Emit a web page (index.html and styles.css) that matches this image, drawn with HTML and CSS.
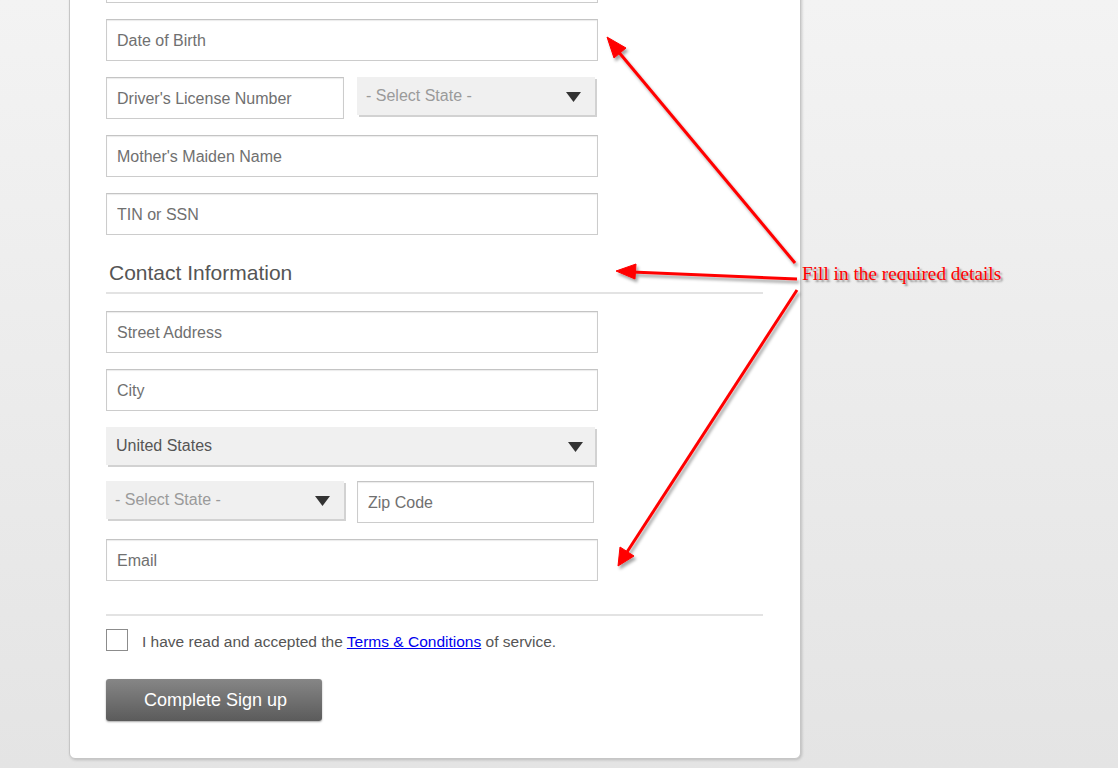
FILE: index.html
```html
<!DOCTYPE html>
<html lang="en">
<head>
<meta charset="utf-8">
<title>Sign up</title>
<link rel="stylesheet" href="styles.css">
</head>
<body>
<div class="page">
  <div class="card">
    <div class="row"><input class="field full" type="text" placeholder="Last Name"></div>
    <div class="row"><input class="field full" type="text" placeholder="Date of Birth"></div>
    <div class="row split">
      <input class="field half" type="text" placeholder="Driver's License Number">
      <div class="select half-sel"><span class="muted">- Select State -</span><svg class="tri" viewBox="0 0 15 10" width="15" height="10"><polygon points="0,0 15,0 7.5,10"/></svg></div>
    </div>
    <div class="row"><input class="field full" type="text" placeholder="Mother's Maiden Name"></div>
    <div class="row"><input class="field full" type="text" placeholder="TIN or SSN"></div>

    <h2 class="section-title">Contact Information</h2>

    <div class="row"><input class="field full" type="text" placeholder="Street Address"></div>
    <div class="row"><input class="field full" type="text" placeholder="City"></div>
    <div class="row"><div class="select wide-sel"><span>United States</span><svg class="tri" viewBox="0 0 15 10" width="15" height="10"><polygon points="0,0 15,0 7.5,10"/></svg></div></div>
    <div class="row split">
      <div class="select half-sel"><span class="muted">- Select State -</span><svg class="tri" viewBox="0 0 15 10" width="15" height="10"><polygon points="0,0 15,0 7.5,10"/></svg></div>
      <input class="field zip" type="text" placeholder="Zip Code">
    </div>
    <div class="row"><input class="field full" type="text" placeholder="Email"></div>

    <div class="divider"></div>

    <label class="terms"><span class="box"></span><span class="terms-text">I have read and accepted the <a href="#">Terms &amp; Conditions</a> of service.</span></label>

    <button class="submit" type="button">Complete Sign up</button>
  </div>

  <svg class="arrows" width="1118" height="768" viewBox="0 0 1118 768">
    <defs>
      <filter id="sh" x="-10%" y="-10%" width="130%" height="130%">
        <feDropShadow dx="2" dy="3" stdDeviation="1.5" flood-color="#000" flood-opacity="0.35"/>
      </filter>
    </defs>
    <g filter="url(#sh)" fill="#ff0000" stroke="#ff0000">
      <line x1="795" y1="263" x2="617" y2="50" stroke-width="3"/>
      <polygon points="607,37 626,48 614,58" stroke-width="1"/>
      <line x1="797" y1="279" x2="632" y2="272" stroke-width="3"/>
      <polygon points="616,271 636,264 635,279" stroke-width="1"/>
      <line x1="797" y1="290" x2="627" y2="552" stroke-width="3"/>
      <polygon points="618,566 620,547 634,556" stroke-width="1"/>
    </g>
  </svg>
  <div class="note">Fill in the required details</div>
</div>
</body>
</html>
```

FILE: styles.css
```css
html, body {
  margin: 0;
  padding: 0;
}

body {
  font-family: "Liberation Sans", Arial, sans-serif;
}

.page {
  position: relative;
  display: flow-root;
  width: 1118px;
  height: 768px;
  overflow: hidden;
  background: linear-gradient(to bottom, #f3f3f3 0%, #e4e4e4 100%);
}

.card {
  width: 732px;
  box-sizing: border-box;
  margin: -56px 0 0 69px;
  padding: 16px 37px 37px 36px;
  background: #fff;
  border: 1px solid #c6c6c6;
  border-radius: 0 0 6px 6px;
  box-shadow: 1px 1px 3px rgba(0, 0, 0, 0.18);
}

.row {
  margin-bottom: 16px;
}

.split {
  display: flex;
  gap: 13px;
}

.field {
  display: block;
  box-sizing: border-box;
  height: 42px;
  margin: 0;
  padding: 2px 10px 0 10px;
  border: 1px solid #cccccc;
  border-top-color: #c4c4c4;
  box-shadow: inset 0 1px 1px rgba(0, 0, 0, 0.08);
  background: #fff;
  font-family: "Liberation Sans", Arial, sans-serif;
  font-size: 16px;
  color: #555;
  outline: none;
}

.field::placeholder {
  color: #707070;
  opacity: 1;
}

.full {
  width: 492px;
}

.half {
  width: 238px;
}

.zip {
  width: 237px;
}

.select {
  box-sizing: border-box;
  height: 38px;
  display: flex;
  align-items: center;
  justify-content: space-between;
  padding: 0 14px 0 10px;
  background: #f0f0f0;
  box-shadow: 2px 2px 0 #d2d2d2;
  font-size: 16px;
  color: #555;
}

.half-sel {
  width: 238px;
}

.wide-sel {
  width: 489px;
  padding-right: 12px;
}

.muted {
  color: #9a9a9a;
  margin-left: -1px;
}

.tri {
  display: block;
  fill: #333;
  margin-top: 2px;
}

.section-title {
  margin: 26px 0 17px 0;
  padding: 0 0 7px 3px;
  font-size: 21px;
  line-height: 24px;
  font-weight: normal;
  color: #555;
  border-bottom: 2px solid #e3e3e3;
}

.divider {
  height: 2px;
  background: #e3e3e3;
  margin-top: 33px;
  margin-bottom: 13px;
}

.terms {
  display: flex;
  align-items: center;
  gap: 14px;
  font-size: 15.5px;
  color: #555;
  height: 22px;
}

.terms-text {
  padding-top: 4px;
}

.box {
  box-sizing: border-box;
  width: 22px;
  height: 22px;
  border: 1px solid #8c8c8c;
  background: #fff;
  flex: none;
}

.terms a {
  color: #0000ee;
  text-decoration: underline;
}

.submit {
  display: block;
  margin-top: 28px;
  width: 216px;
  height: 42px;
  border: none;
  border-radius: 3px;
  background: linear-gradient(to bottom, #868686 0%, #5b5b5b 100%);
  box-shadow: 0 1px 2px rgba(0, 0, 0, 0.35);
  color: #fff;
  font-family: "Liberation Sans", Arial, sans-serif;
  font-size: 18px;
  padding: 0 0 0 3px;
}

.arrows {
  position: absolute;
  left: 0;
  top: 0;
  pointer-events: none;
}

.note {
  position: absolute;
  left: 802px;
  top: 262px;
  font-family: "Liberation Serif", "Times New Roman", serif;
  font-size: 19.3px;
  line-height: 24px;
  color: #ff0000;
  text-shadow: 2px 2px 2px rgba(0, 0, 0, 0.4);
  white-space: nowrap;
}
```
